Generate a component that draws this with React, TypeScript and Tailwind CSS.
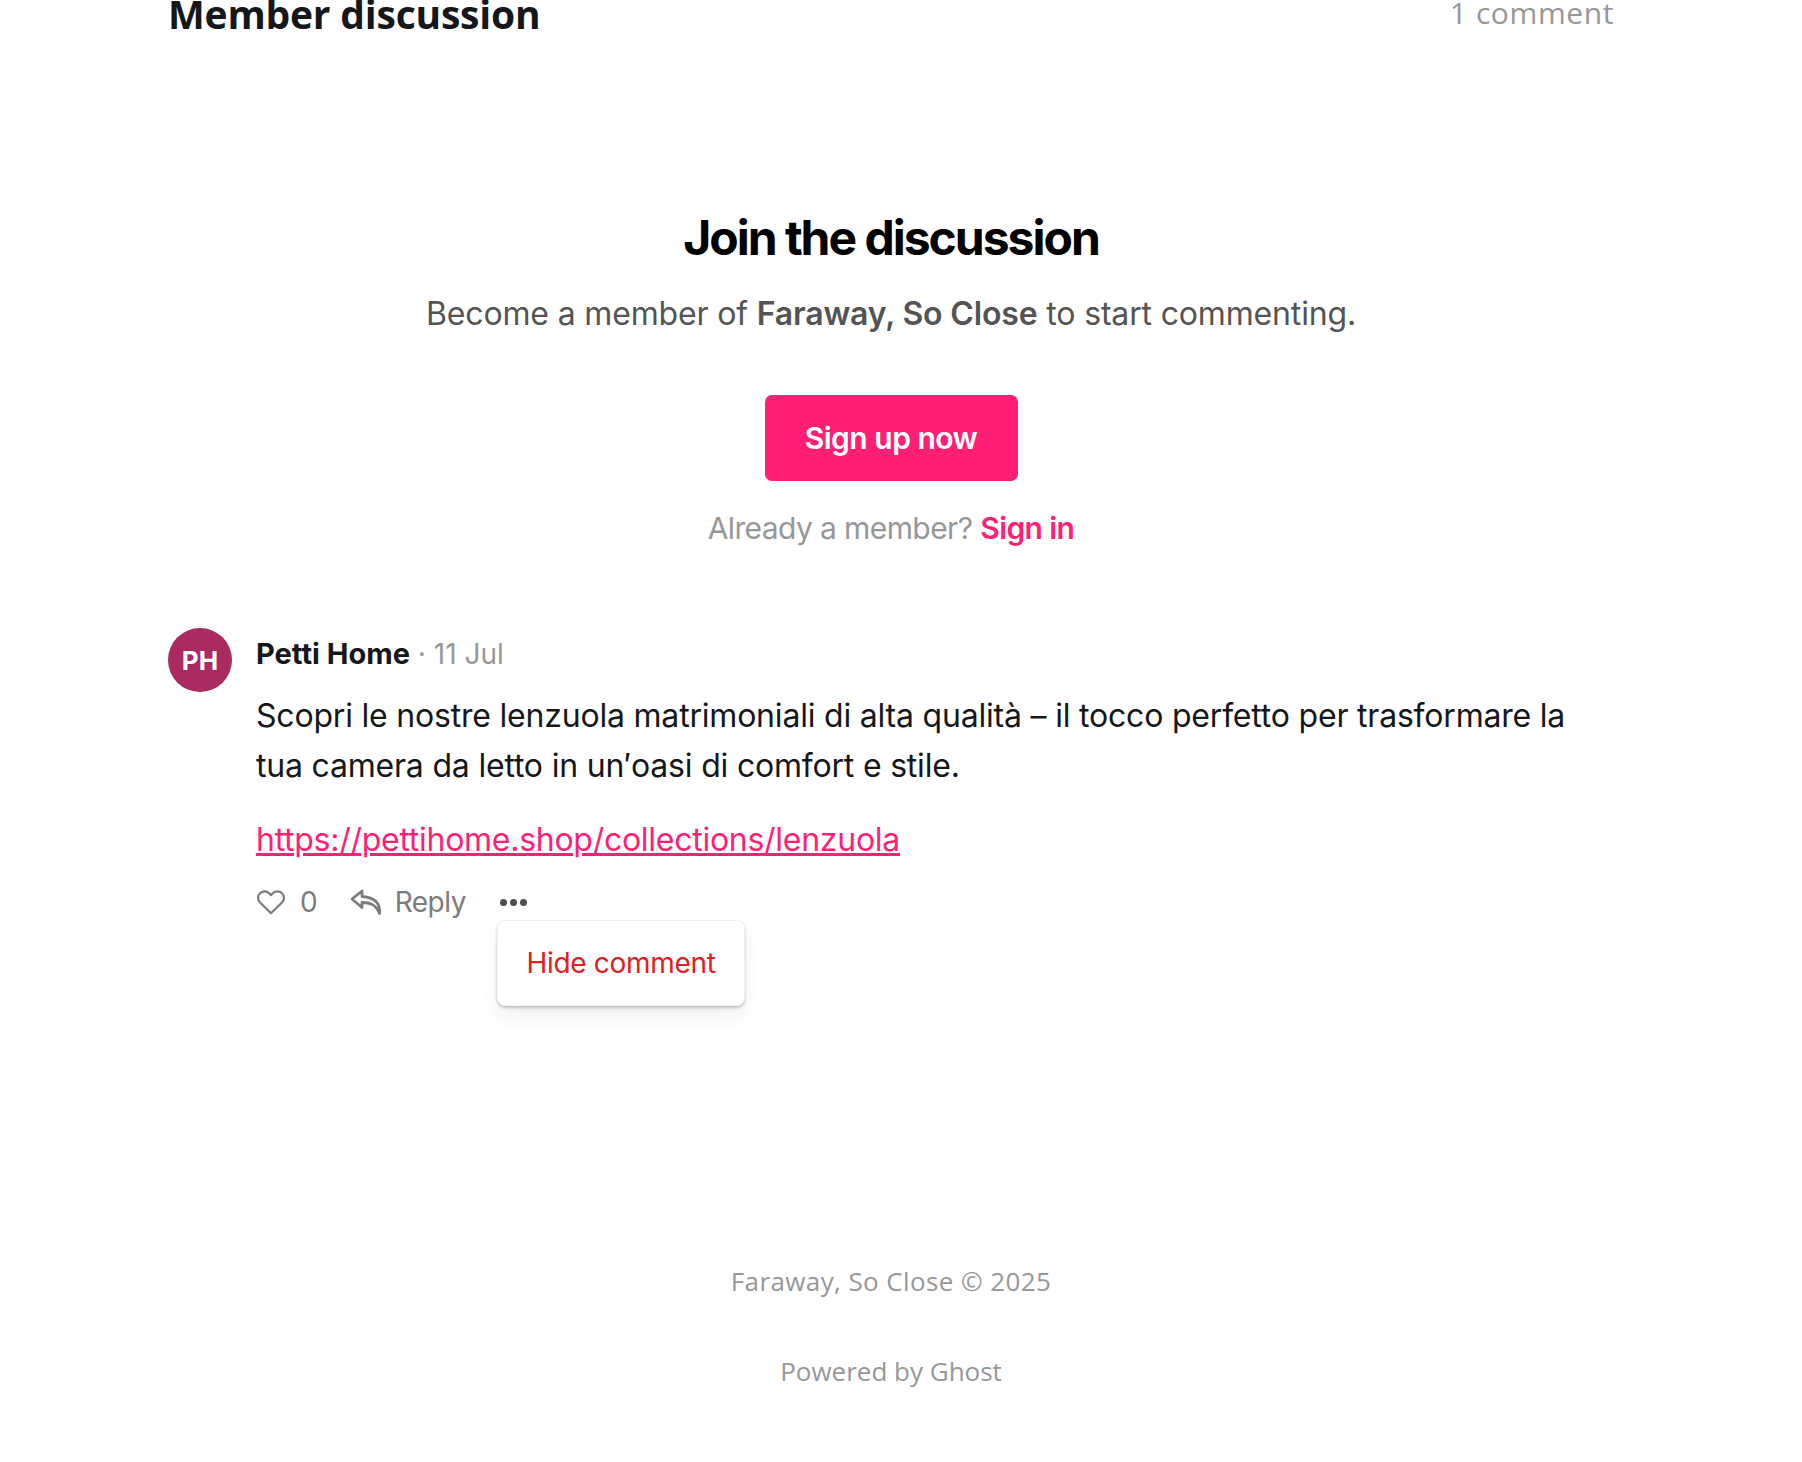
import React from 'react';

const inter = { fontFamily: 'Inter, sans-serif' };

function HeartIcon() {
  return (
    <svg width="30" height="30" viewBox="0 0 24 24" fill="none" stroke="#7c7c7c" strokeWidth="1.8" strokeLinejoin="round">
      <path d="M12 21 3.2 12.4a5.2 5.2 0 0 1 0-7.4 5.2 5.2 0 0 1 7.3 0L12 6.5 13.500 5a5.2 5.2 0 0 1 7.3 0 5.2 5.2 0 0 1 0 7.4Z" />
    </svg>
  );
}

function ReplyIcon() {
  return (
    <svg width="32" height="27" viewBox="0 0 32 27" fill="none" stroke="#7c7c7c" strokeWidth="2.8" strokeLinejoin="round" strokeLinecap="round">
      <path d="M12 2 2 10 12 18.500v-5c8 0 14 2 17.500 11 1-9.500-4-16-17.500-17Z" />
    </svg>
  );
}

export default function App() {
  return (
    <div className="min-h-[1462px] bg-white overflow-hidden relative" style={inter}>
      <div className="mx-[168px] w-[1446px]">
        <div className="flex justify-between items-baseline h-[62px] mt-[-14px]">
          <h2 className="text-[39px] leading-[56px] font-bold text-[#15171a] font-['Open_Sans'] tracking-[-0.2px]">Member discussion</h2>
          <span className="text-[30px] font-['Open_Sans'] text-[#979797] tracking-[0.6px] relative top-[-5px]">1 comment</span>
        </div>

        <section className="flex flex-col items-center pt-[154px]">
          <h1 className="text-[48px] leading-[72px] font-bold tracking-[-2px] text-black">Join the discussion</h1>
          <p className="mt-[16px] text-[32px] leading-[48px] tracking-[-0.16px] text-[#545454]">
            Become a member of <b className="font-semibold">Faraway, So Close</b> to start commenting.
          </p>
          <button className="mt-[57px] w-[253px] h-[86px] rounded-[7px] bg-[#ff1f75] text-white text-[30px] font-semibold tracking-[-0.5px]">Sign up now</button>
          <p className="mt-[24px] text-[30px] leading-[46px] tracking-[-0.6px] text-[#979797]">
            Already a member? <a className="font-semibold text-[#ff1f75]">Sign in</a>
          </p>
        </section>

        <article className="flex gap-6 mt-[77px]">
          <div className="w-16 h-16 shrink-0 rounded-full bg-[#a92b62] text-white flex items-center justify-center text-[26px] font-bold">PH</div>
          <div className="flex-1 relative">
            <div className="mt-[4px] text-[28px] leading-[44px] text-[#979797]">
              <b className="font-bold text-[29px] text-[#15171a]">Petti Home</b> · 11 Jul
            </div>
            <p className="mt-[15px] pr-[30px] text-[32px] leading-[50px] tracking-[-0.2px] text-[#15171a]">
              Scopri le nostre lenzuola matrimoniali di alta qualità – il tocco perfetto per trasformare la tua camera da letto in un′oasi di comfort e stile.
            </p>
            <p className="mt-[24px] text-[32px] leading-[50px] tracking-[-0.27px] text-[#ff1f75] underline">https://pettihome.shop/collections/lenzuola</p>
            <div className="flex items-center mt-[15px] text-[28px] leading-[44px] text-[#7c7c7c]">
              <HeartIcon />
              <span className="ml-[14px]">0</span>
              <span className="ml-[32px]"><ReplyIcon /></span>
              <span className="ml-[13px] tracking-[-0.5px]">Reply</span>
              <span className="ml-[34px] flex gap-[3px]">
                <i className="w-[7px] h-[7px] rounded-full bg-[#4d4d4d]" />
                <i className="w-[7px] h-[7px] rounded-full bg-[#4d4d4d]" />
                <i className="w-[7px] h-[7px] rounded-full bg-[#4d4d4d]" />
              </span>
            </div>
            <div className="absolute left-[225px] top-[292px] w-[278px] h-[107px] overflow-hidden">
              <div className="ml-[16px] w-[248px] h-[86px] bg-white rounded-[8px] border border-[#f0f0f0] shadow-[0_2px_3px_rgba(0,0,0,0.2),0_12px_20px_rgba(0,0,0,0.06)] flex items-center justify-center text-[28px] tracking-[-0.3px] text-[#e0201c]">Hide comment</div>
            </div>
          </div>
        </article>

        <footer className="mt-[337px] flex flex-col items-center text-[26px] text-[#979797] font-['Open_Sans']">
          <span className="leading-[40px] tracking-[0.4px]">Faraway, So Close © 2025</span>
          <span className="mt-[50px] leading-[40px]">Powered by Ghost</span>
        </footer>
      </div>
    </div>
  );
}
